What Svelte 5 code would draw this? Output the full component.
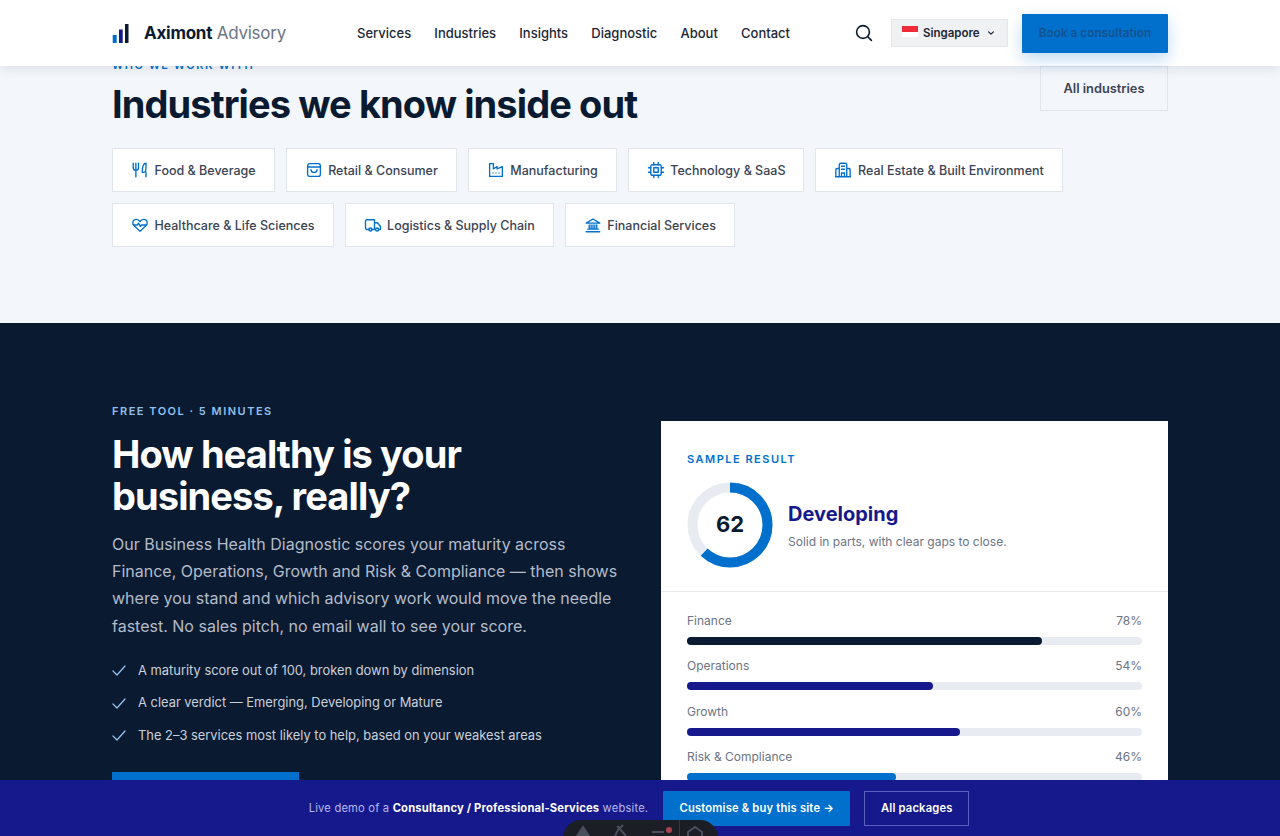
<script>
  const industries = [
    { name: 'Food & Beverage', icon: 'food' },
    { name: 'Retail & Consumer', icon: 'bag' },
    { name: 'Manufacturing', icon: 'factory' },
    { name: 'Technology & SaaS', icon: 'chip' },
    { name: 'Real Estate & Built Environment', icon: 'building' },
    { name: 'Healthcare & Life Sciences', icon: 'heart' },
    { name: 'Logistics & Supply Chain', icon: 'truck' },
    { name: 'Financial Services', icon: 'bank' },
  ];

  const nav = ['Services', 'Industries', 'Insights', 'Diagnostic', 'About', 'Contact'];

  const bullets = [
    'A maturity score out of 100, broken down by dimension',
    'A clear verdict — Emerging, Developing or Mature',
    'The 2–3 services most likely to help, based on your weakest areas',
  ];

  const scores = [
    { label: 'Finance', value: 78, color: '#0a1a30' },
    { label: 'Operations', value: 54, color: '#15198c' },
    { label: 'Growth', value: 60, color: '#15198c' },
    { label: 'Risk & Compliance', value: 46, color: '#0070cc' },
  ];

  const circumference = 2 * Math.PI * 37.5;
</script>

<div class="page">
  <header class="topbar">
    <div class="wrap topbar-in">
      <div class="brand">
        <svg width="19" height="19" viewBox="0 0 19 19" aria-hidden="true">
          <rect x="0.7" y="11" width="4" height="8" fill="#0070cc" />
          <rect x="7" y="5.500" width="3.700" height="13.500" fill="#15198c" />
          <rect x="13" y="0" width="3.500" height="19" fill="#0a1a30" />
        </svg>
        <span class="brand-name"><b>Aximont</b> Advisory</span>
      </div>
      <nav class="nav">
        {#each nav as item}
          <span>{item}</span>
        {/each}
      </nav>
      <div class="tools">
        <svg class="search" width="18" height="18" viewBox="0 0 18 18" fill="none" stroke="#0a1a30" stroke-width="1.6" stroke-linecap="round" aria-hidden="true">
          <circle cx="8" cy="8" r="6.4" />
          <path d="M12.8 12.8 16.4 16.4" />
        </svg>
        <div class="locale">
          <span class="flag"></span>
          <span>Singapore</span>
          <svg width="8" height="6" viewBox="0 0 8 6" fill="none" stroke="#1c2636" stroke-width="1.2" stroke-linecap="round" stroke-linejoin="round" aria-hidden="true"><path d="M1.600 1.800 4 4.200l2.400-2.400" /></svg>
        </div>
        <div class="book">Book a consultation</div>
      </div>
    </div>
  </header>

  <main class="scroller">
    <section class="industries">
      <div class="wrap">
        <div class="ind-head">
          <div>
            <p class="eyebrow">WHO WE WORK WITH</p>
            <h2>Industries we know inside out</h2>
          </div>
          <div class="all">All industries</div>
        </div>
        <div class="chips">
          {#each industries as ind}
            <div class="chip">
              <svg width="18" height="18" viewBox="0 0 24 24" fill="none" stroke="#0070cc" stroke-width="1.8" stroke-linecap="round" stroke-linejoin="round" aria-hidden="true">
                {#if ind.icon === 'food'}
                  <path d="M3 3v6a3.500 3.500 0 0 0 7 0V3M6.500 3v18M15 15c5 1 5-2 5-12-3 0-5 4-5 12Zm5 0v6" />
                {:else if ind.icon === 'bag'}
                  <rect x="3.500" y="3.500" width="17" height="17" rx="3" /><path d="M3.500 8h17M8 11.500c0 5 8 5 8 0" />
                {:else if ind.icon === 'factory'}
                  <path d="M3.500 3.500h5v7l5-3v3l7-3v13h-17Z" /><path d="M8 16h.01M12 16h.01M16 16h.01" />
                {:else if ind.icon === 'chip'}
                  <rect x="5" y="5" width="14" height="14" rx="2.500" /><rect x="9" y="9" width="6" height="6" /><path d="M9 2v3M15 2v3M9 19v3M15 19v3M2 9h3M2 15h3M19 9h3M19 15h3" />
                {:else if ind.icon === 'building'}
                  <path d="M7 21V5a2 2 0 0 1 2-2h6a2 2 0 0 1 2 2v16M7 10H4a1.500 1.500 0 0 0-1.500 1.500V21M17 10h3a1.500 1.500 0 0 1 1.500 1.500V21M2 21h20M10 7h4M10 11h4M10 21v-5h4v5" />
                {:else if ind.icon === 'heart'}
                  <path d="M12 20.500 4 12.800C1 9.800 2.200 4.500 7 4.500c2.200 0 4 1.200 5 3 1-1.800 2.800-3 5-3 4.800 0 6 5.300 3 8.300Z" /><path d="M3 12h5.500l1.500-2.500 2.500 4.500 1.500-2h7" />
                {:else if ind.icon === 'truck'}
                  <path d="M7 18H4a2 2 0 0 1-2-2V7a2 2 0 0 1 2-2h9a1 1 0 0 1 1 1v12h-4M14 9h4l4 5v4h-2.500" /><circle cx="8.500" cy="18" r="2" /><circle cx="17.500" cy="18" r="2" />
                {:else}
                  <path d="M3 9.500 12 4l9 5.500ZM3 21h18M5 17.500h14M7 12v5M12 12v5M17 12v5M9.500 12v5M14.500 12v5" />
                {/if}
              </svg>
              <span>{ind.name}</span>
            </div>
          {/each}
        </div>
      </div>
    </section>

    <section class="diagnostic">
      <div class="wrap diag-grid">
        <div class="diag-copy">
          <p class="eyebrow light">FREE TOOL · 5 MINUTES</p>
          <h2 class="diag-title">How healthy is your<br />business, really?</h2>
          <p class="lead">Our Business Health Diagnostic scores your maturity across Finance, Operations, Growth and Risk &amp; Compliance — then shows where you stand and which advisory work would move the needle fastest. No sales pitch, no email wall to see your score.</p>
          <ul class="checks">
            {#each bullets as b}
              <li>
                <svg width="14" height="11" viewBox="0 0 14 11" fill="none" stroke="#8fc0ee" stroke-width="1.300" stroke-linecap="round" stroke-linejoin="round" aria-hidden="true"><path d="M1 6 5 10l8-9" /></svg>
                <span>{b}</span>
              </li>
            {/each}
          </ul>
          <div class="start">Start the diagnostic</div>
        </div>

        <div class="card">
          <div class="card-top">
            <p class="eyebrow">SAMPLE RESULT</p>
            <div class="verdict">
              <div class="ring">
                <svg width="86" height="86" viewBox="0 0 86 86" aria-hidden="true">
                  <circle cx="43" cy="43" r="37.500" fill="none" stroke="#e8ecf2" stroke-width="10" />
                  <circle cx="43" cy="43" r="37.500" fill="none" stroke="#0070cc" stroke-width="10" stroke-dasharray="{circumference * 0.62} {circumference}" transform="rotate(-90 43 43)" />
                </svg>
                <span class="ring-num">62</span>
              </div>
              <div>
                <div class="verdict-name">Developing</div>
                <div class="verdict-sub">Solid in parts, with clear gaps to close.</div>
              </div>
            </div>
          </div>
          <div class="card-bars">
            {#each scores as s}
              <div class="score">
                <div class="score-row"><span>{s.label}</span><span>{s.value}%</span></div>
                <div class="track"><div class="fill" style="width: {s.value}%; background: {s.color}"></div></div>
              </div>
            {/each}
          </div>
        </div>
      </div>
    </section>
  </main>

  <div class="demobar">
    <span class="demo-text">Live demo of a <b>Consultancy / Professional-Services</b> website.</span>
    <span class="demo-buy">Customise &amp; buy this site →</span>
    <span class="demo-all">All packages</span>
  </div>
  <div class="pill">
    <svg width="155" height="16" viewBox="0 0 155 16" fill="none" stroke="#4a4f5c" stroke-width="2" aria-hidden="true">
      <path d="M14 16 20 7l6 9Z" fill="#4a4f5c" />
      <path d="M52 16l4-8 7 8M54 6l3 2 3-3" />
      <path d="M89 12h12" />
      <circle cx="106" cy="10" r="3" fill="#a8444f" stroke="none" />
      <path d="M116.500 0v16" stroke="#34373f" stroke-width="1" />
      <path d="M125 16v-4l7-5 7 5v4" />
    </svg>
  </div>
</div>

<style>
  :global(body) {
    margin: 0;
    font-family: 'Inter', 'Liberation Sans', sans-serif;
  }
  .page {
    height: 836px;
    display: flex;
    flex-direction: column;
    overflow: hidden;
    color: #0a1a30;
  }
  .wrap {
    width: 1056px;
    margin: 0 auto;
  }
  .topbar {
    flex: none;
    height: 66px;
    background: #fff;
    box-shadow: 0 2px 12px rgba(10, 26, 48, 0.1);
    position: relative;
    z-index: 3;
  }
  .topbar-in {
    height: 66px;
    display: flex;
    align-items: center;
  }
  .brand {
    display: flex;
    align-items: center;
    gap: 13px;
    width: 245px;
  }
  .brand svg {
    margin-top: 1px;
  }
  .brand-name {
    font-size: 17px;
    letter-spacing: -0.25px;
    color: #6b7483;
    white-space: nowrap;
  }
  .brand-name b {
    font-weight: 700;
    color: #0a1a30;
  }
  .nav {
    display: flex;
    gap: 23.200px;
    font-size: 13px;
    font-weight: 500;
    color: #1c2636;
  }
  .tools {
    margin-left: auto;
    display: flex;
    align-items: center;
  }
  .search {
    margin-right: 18px;
  }
  .locale {
    width: 117px;
    height: 28px;
    box-sizing: border-box;
    display: flex;
    align-items: center;
    gap: 5px;
    padding-left: 10px;
    background: #f0f1f2;
    border: 1px solid #e6e8eb;
    font-size: 11.500px;
    font-weight: 600;
    color: #1c2636;
    margin-right: 14px;
  }
  .flag {
    width: 16px;
    height: 11px;
    margin-top: -3px;
    background: linear-gradient(#ee2b3b 50%, #fff 50%);
  }
  .locale svg {
    margin-left: 2px;
  }
  .book {
    width: 146px;
    height: 39px;
    display: flex;
    align-items: center;
    justify-content: center;
    background: #0070cc;
    color: #14528f;
    font-size: 11.800px;
    font-weight: 600;
    border-radius: 1px;
    box-shadow: 0 6px 16px rgba(0, 112, 204, 0.25);
  }
  .scroller {
    flex: 1;
    min-height: 0;
    overflow: hidden;
  }
  .industries {
    background: #f3f6fb;
    height: 265px;
    margin-top: -8px;
  }
  .ind-head {
    display: flex;
    justify-content: space-between;
    align-items: flex-start;
  }
  .eyebrow {
    margin: 0;
    font-size: 11px;
    line-height: 14px;
    font-weight: 600;
    letter-spacing: 1.500px;
    color: #0070cc;
  }
  .eyebrow.light {
    color: #8fc0ee;
  }
  .ind-head h2 {
    margin: 9px 0 0;
    font-size: 38px;
    line-height: 46px;
    font-weight: 700;
    letter-spacing: -0.9px;
    color: #0a1a30;
  }
  .all {
    width: 128px;
    height: 45px;
    box-sizing: border-box;
    display: flex;
    align-items: center;
    justify-content: center;
    border: 1px solid #e1e5ec;
    font-size: 12.800px;
    font-weight: 600;
    color: #3a4354;
    margin-top: 8px;
  }
  .chips {
    display: flex;
    flex-wrap: wrap;
    gap: 11px;
    margin-top: 21px;
  }
  .chip {
    height: 44px;
    box-sizing: border-box;
    display: flex;
    align-items: center;
    gap: 5.500px;
    padding: 0 18px;
    background: #fff;
    border: 1px solid #e1e5ec;
    font-size: 12.500px;
    font-weight: 500;
    color: #3a4354;
    white-space: nowrap;
  }
  .diagnostic {
    background: #0a1a30;
    color: #fff;
    padding-top: 81px;
    height: 520px;
  }
  .diag-grid {
    display: grid;
    grid-template-columns: 507px 507px;
    justify-content: space-between;
    align-items: start;
  }
  .diag-title {
    margin: 16px 0 0;
    font-size: 38px;
    line-height: 41.800px;
    font-weight: 700;
    letter-spacing: -0.9px;
  }
  .lead {
    margin: 13px 0 0;
    font-size: 16px;
    line-height: 27.400px;
    color: #b4bcc9;
  }
  .checks {
    list-style: none;
    margin: 19.500px 0 0;
    padding: 0;
    display: flex;
    flex-direction: column;
    gap: 10.400px;
  }
  .checks li {
    display: flex;
    align-items: center;
    gap: 12px;
    font-size: 12.900px;
    line-height: 22px;
    color: #c9d0da;
    white-space: nowrap;
  }
  .start {
    margin-top: 25px;
    width: 187px;
    height: 48px;
    display: flex;
    align-items: center;
    justify-content: center;
    background: #0070cc;
    font-size: 13px;
    font-weight: 600;
  }
  .card {
    background: #fff;
    margin-top: 17px;
    height: 420px;
    color: #0a1a30;
  }
  .card-top {
    padding: 31px 26px 23px;
    border-bottom: 1px solid #e8ecf2;
  }
  .verdict {
    display: flex;
    align-items: center;
    gap: 15px;
    margin-top: 16px;
  }
  .ring {
    position: relative;
    width: 86px;
    height: 86px;
  }
  .ring svg {
    display: block;
  }
  .ring-num {
    position: absolute;
    inset: 0;
    padding-bottom: 2px;
    display: flex;
    align-items: center;
    justify-content: center;
    font-size: 22px;
    font-weight: 700;
  }
  .verdict-name {
    margin-top: 1px;
    font-size: 20px;
    line-height: 26px;
    font-weight: 700;
    color: #15198c;
  }
  .verdict-sub {
    margin-top: 6px;
    font-size: 12px;
    line-height: 18px;
    color: #6b7483;
  }
  .card-bars {
    padding: 20px 26px;
    display: flex;
    flex-direction: column;
    gap: 12.300px;
  }
  .score-row {
    display: flex;
    justify-content: space-between;
    font-size: 12px;
    line-height: 18px;
    color: #6b7483;
  }
  .track {
    height: 8px;
    margin-top: 7px;
    background: #e8ecf2;
    border-radius: 4px;
  }
  .fill {
    height: 8px;
    border-radius: 4px;
  }
  .demobar {
    position: fixed;
    left: 0;
    right: 0;
    bottom: 0;
    height: 56px;
    box-sizing: border-box;
    padding-right: 2px;
    z-index: 4;
    background: #15198c;
    display: flex;
    align-items: center;
    justify-content: center;
    font-size: 11.200px;
    letter-spacing: 0.18px;
  }
  .demo-text {
    color: #b5b8ec;
    margin-right: 15px;
  }
  .demo-text b {
    color: #fff;
    font-weight: 700;
  }
  .demo-buy {
    width: 187px;
    height: 35px;
    display: flex;
    align-items: center;
    justify-content: center;
    background: #0070cc;
    color: #fff;
    font-weight: 600;
    margin-right: 14px;
    border-radius: 1px;
  }
  .demo-all {
    width: 105px;
    height: 35px;
    box-sizing: border-box;
    display: flex;
    align-items: center;
    justify-content: center;
    border: 1px solid #5a5fc0;
    color: #fff;
    font-weight: 600;
  }
  .pill {
    position: fixed;
    left: 563px;
    bottom: -20px;
    width: 155px;
    height: 36px;
    background: #1c1e26;
    border-radius: 18px;
    z-index: 5;
    overflow: hidden;
  }
  .pill svg {
    display: block;
  }
</style>
